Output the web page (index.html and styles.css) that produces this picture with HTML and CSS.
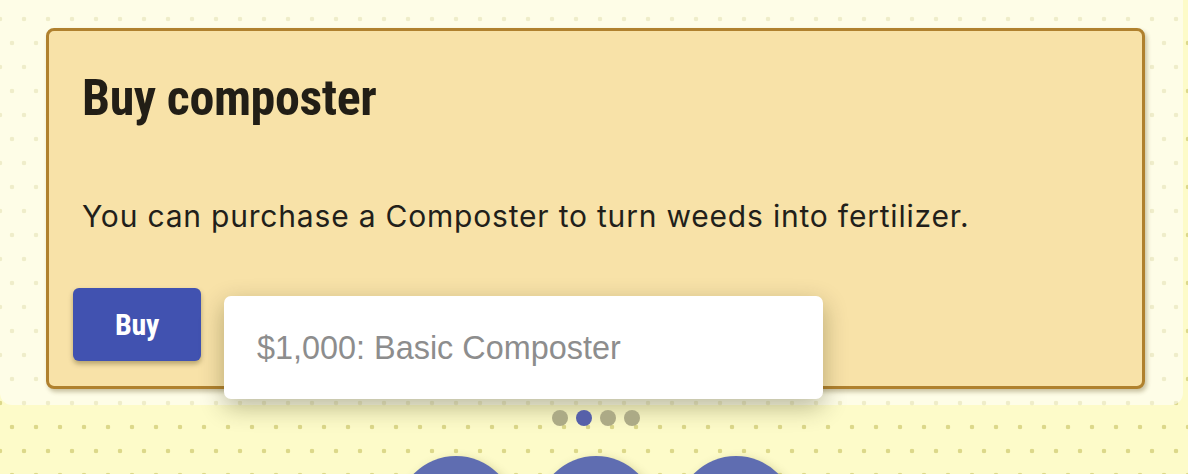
FILE: index.html
```html
<!DOCTYPE html>
<html lang="en">
<head>
<meta charset="utf-8">
<title>Buy composter</title>
<link rel="stylesheet" href="styles.css">
</head>
<body>
<div class="page">
  <div class="panel">
    <section class="card">
      <div class="text">
        <h1 class="title">Buy composter</h1>
        <p class="desc">You can purchase a Composter to turn weeds into fertilizer.</p>
      </div>
      <div class="actions">
        <button class="buy" type="button">Buy</button>
        <div class="select">$1,000: Basic Composter</div>
      </div>
    </section>
  </div>
  <div class="below">
    <div class="pager">
      <span class="dot"></span>
      <span class="dot active"></span>
      <span class="dot"></span>
      <span class="dot"></span>
    </div>
    <div class="circles">
      <span class="circle"></span>
      <span class="circle"></span>
      <span class="circle"></span>
    </div>
  </div>
</div>
</body>
</html>
```

FILE: styles.css
```css
html, body {
  margin: 0;
  padding: 0;
}

body {
  width: 1188px;
  height: 474px;
  overflow: hidden;
  background-color: #fdfbc9;
  background-image:
    radial-gradient(circle, #dcd88a 2px, rgba(220, 216, 138, 0) 2.6px),
    radial-gradient(circle, #dcd88a 2px, rgba(220, 216, 138, 0) 2.6px);
  background-size: 24px 48px, 24px 48px;
  background-position: 12px 43px, 0px 19px;
  font-family: Inter, "Liberation Sans", sans-serif;
}

.page {
  height: 474px;
  overflow: hidden;
  display: flex;
  flex-direction: column;
}

.panel {
  width: 1183px;
  height: 405px;
  flex: none;
  box-sizing: border-box;
  padding: 28px 0 0 46px;
  background: rgba(255, 255, 255, 0.55);
  border-radius: 0 0 12px 12px;
}

.card {
  width: 1099px;
  height: 361px;
  box-sizing: border-box;
  border: 3px solid #b0812e;
  border-radius: 8px;
  background: #f8e2a8;
  box-shadow: 2px 3px 4px rgba(80, 60, 0, 0.3);
  padding: 37px 0 0 24px;
  display: flex;
  flex-direction: column;
}

.text {
  padding-left: 9px;
}

.title {
  margin: 0;
  font-family: "Liberation Sans Narrow", "Roboto Condensed", "DejaVu Sans Condensed", sans-serif;
  font-weight: 700;
  font-size: 50px;
  line-height: 60px;
  letter-spacing: -0.4px;
  color: #221e16;
}

.desc {
  margin: 68px 0 0 0;
  font-family: Inter, "Liberation Sans", sans-serif;
  font-size: 30px;
  line-height: 40px;
  letter-spacing: 0.8px;
  color: #221f1a;
}

.actions {
  margin-top: 52px;
  display: flex;
  align-items: flex-start;
  gap: 23px;
}

.buy {
  width: 128px;
  height: 73px;
  border: 0;
  border-radius: 6px;
  background: #4152b0;
  color: #ffffff;
  font-family: "Liberation Sans Narrow", "Roboto Condensed", "DejaVu Sans Condensed", sans-serif;
  font-weight: 700;
  font-size: 30px;
  letter-spacing: -0.3px;
  padding: 0;
  box-shadow: 0 3px 5px rgba(60, 50, 0, 0.35);
  display: flex;
  align-items: center;
  justify-content: center;
}

.select {
  margin-top: 8px;
  width: 599px;
  height: 103px;
  box-sizing: border-box;
  padding: 34px 0 0 33px;
  background: #ffffff;
  border-radius: 7px;
  box-shadow: 0 8px 24px rgba(40, 40, 0, 0.32);
  font-family: "Liberation Sans", Arial, sans-serif;
  font-size: 32.4px;
  line-height: 36px;
  color: #8d8d8d;
}

.below {
  width: 1099px;
  margin-left: 46px;
  display: flex;
  flex-direction: column;
  align-items: center;
}

.pager {
  margin-top: 5px;
  display: flex;
  gap: 8px;
}

.dot {
  width: 16px;
  height: 16px;
  border-radius: 50%;
  background: #acaa86;
}

.dot.active {
  background: #5660a9;
}

.circles {
  margin-top: 30px;
  display: flex;
  gap: 22px;
}

.circle {
  width: 118px;
  height: 118px;
  flex: none;
  border-radius: 50%;
  background: #5f6db1;
  box-shadow: 3px 3px 10px rgba(80, 80, 0, 0.25);
}
```
